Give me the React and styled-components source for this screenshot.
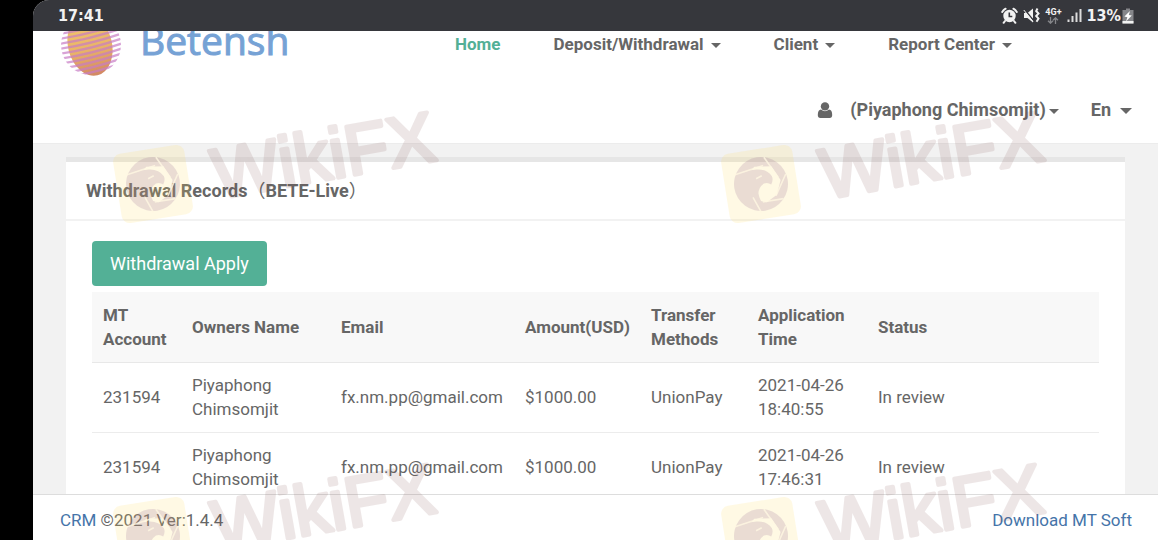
import React from 'react';
import styled, { createGlobalStyle } from 'styled-components';

const columns = [
  { title: 'MT Account', width: 89 },
  { title: 'Owners Name', width: 149 },
  { title: 'Email', width: 184 },
  { title: 'Amount(USD)', width: 126 },
  { title: 'Transfer Methods', width: 107 },
  { title: 'Application Time', width: 120 },
  { title: 'Status' },
];

const records = [
  ['231594', 'Piyaphong Chimsomjit', 'fx.nm.pp@gmail.com', '$1000.00', 'UnionPay', '2021-04-26 18:40:55', 'In review'],
  ['231594', 'Piyaphong Chimsomjit', 'fx.nm.pp@gmail.com', '$1000.00', 'UnionPay', '2021-04-26 17:46:31', 'In review'],
];

function App() {
  return (
    <Screen>
      <GlobalStyle />
      <Page>
        <StatusBar />
        <Header>
          <TopRow>
            <Brand href="#">
              <Globe />
              <BrandName>Betensh</BrandName>
            </Brand>
            <Nav>
              <NavLink href="#">Home</NavLink>
              <MenuButton>Deposit/Withdrawal <Caret /></MenuButton>
              <MenuButton>Client <Caret /></MenuButton>
              <MenuButton>Report Center <Caret /></MenuButton>
            </Nav>
          </TopRow>
          <UserRow>
            <UserButton>
              <UserIcon />
              <span>(Piyaphong Chimsomjit)</span>
              <TightCaret />
            </UserButton>
            <UserButton>En <WideCaret /></UserButton>
          </UserRow>
        </Header>
        <Main>
          <Card>
            <CardTitle>
              Withdrawal Records<Paren>（</Paren>BETE-Live<Paren>）</Paren>
            </CardTitle>
            <CardBody>
              <ApplyButton>Withdrawal Apply</ApplyButton>
              <Table>
                <colgroup>
                  {columns.map((c) => <col key={c.title} width={c.width} />)}
                </colgroup>
                <thead>
                  <tr>
                    {columns.map((c) => <Th key={c.title} scope="col">{c.title}</Th>)}
                  </tr>
                </thead>
                <tbody>
                  {records.map((row, i) => (
                    <tr key={i}>
                      {row.map((cell, j) => <Td key={j}>{cell}</Td>)}
                    </tr>
                  ))}
                </tbody>
              </Table>
            </CardBody>
          </Card>
        </Main>
        <Footer>
          <span><FooterLink href="#">CRM</FooterLink> ©2021 Ver:1.4.4</span>
          <FooterLink href="#">Download MT Soft</FooterLink>
        </Footer>
      </Page>
      <Watermarks aria-hidden="true">
        <Watermark />
        <Watermark />
        <Watermark />
        <Watermark />
      </Watermarks>
    </Screen>
  );
}

export default App;

function StatusBar() {
  return (
    <Bar>
      <span>17:41</span>
      <BarIcons>
        <svg width="17" height="17" viewBox="0 0 17 17">
          <circle cx="8.5" cy="9" r="6.2" fill="#f2f2f2" />
          <path d="M1.2 5 A11 11 0 0 1 4.6 1.7 M12.4 1.7 A11 11 0 0 1 15.8 5 M4 14 L2.6 15.8 M13 14 L14.4 15.8" stroke="#f2f2f2" strokeWidth="2" fill="none" strokeLinecap="round" />
          <path d="M8.3 5.5 V9.5 H11.3" stroke="#36373c" strokeWidth="1.6" fill="none" />
        </svg>
        <svg width="17" height="17" viewBox="0 0 17 17">
          <path d="M1 6 H4.5 L10 1.5 V15.5 L4.5 11 H1 Z" fill="#f2f2f2" />
          <path d="M1.5 2.5 L11 14" stroke="#36373c" strokeWidth="1.4" />
          <path d="M0.8 3 L10 14.6" stroke="#f2f2f2" strokeWidth="1" />
          <path d="M14.5 1.5 L13.2 4 L15.5 6.5 L13.2 9 L15.5 11.5 L13.5 14.8" stroke="#f2f2f2" strokeWidth="2" fill="none" />
        </svg>
        <Network>
          4G+
          <svg width="12" height="7" viewBox="0 0 12 7">
            <path d="M3.5 0 V6 M1 3.8 L3.5 6.2 L6 3.8 M8.5 7 V1 M6 3.2 L8.5 0.8 L11 3.2" stroke="#85868a" strokeWidth="1.3" fill="none" />
          </svg>
        </Network>
        <svg width="15" height="15" viewBox="0 0 15 15">
          <path d="M0.5 11.5 H2.5 V14 H0.5 Z M4.5 8 H6.5 V14 H4.5 Z M8.5 4.5 H10.5 V14 H8.5 Z M12.5 1 H14.5 V14 H12.5 Z" fill="#dcdcdc" />
        </svg>
        <Battery>
          13%
          <svg width="12" height="16" viewBox="0 0 12 16">
            <path d="M4 0.5 H8 V2 H11.5 V15.5 H0.5 V2 H4 Z" fill="#85868a" />
            <path d="M0.5 13 H11.5 V15.5 H0.5 Z" fill="#f2f2f2" />
            <path d="M8 3 L2.4 8.6 L5.4 9.2 L4 13.4 L9.8 7.6 L6.8 7 Z" fill="#fff" />
          </svg>
        </Battery>
      </BarIcons>
    </Bar>
  );
}

function Globe() {
  const lines = Array.from({ length: 15 }, (_, i) => -34 + i * 5);
  return (
    <svg width="62" height="62" viewBox="-31 -31 62 62">
      <defs>
        <clipPath id="globe"><circle r="30" /></clipPath>
        <linearGradient id="core" x1="0" y1="0" x2="0" y2="1">
          <stop offset="0" stopColor="#f2c96c" />
          <stop offset="0.55" stopColor="#e9b468" />
          <stop offset="1" stopColor="#d28862" />
        </linearGradient>
      </defs>
      <ellipse cx="-1" cy="0" rx="22" ry="31" fill="url(#core)" transform="rotate(-14)" />
      <g clipPath="url(#globe)">
        {lines.map((y) => (
          <path key={y} d={`M-32 ${y + 8} Q0 ${y + 3} 32 ${y - 8}`} stroke="#c77cc4" strokeOpacity="0.7" strokeWidth="2.3" fill="none" />
        ))}
      </g>
    </svg>
  );
}

function UserIcon() {
  return (
    <svg width="16" height="16" viewBox="0 0 16 16" fill="#666">
      <circle cx="8" cy="4.4" r="4.2" />
      <path d="M4 7.6 Q8 11 12 7.6 Q15.2 8 15.2 13 Q15.2 16 12.6 16 H3.4 Q0.8 16 0.8 13 Q0.8 8 4 7.6 Z" />
    </svg>
  );
}

function Watermark() {
  return (
    <svg width="350" height="140" viewBox="0 0 350 140">
      <g transform="translate(41 79) rotate(-9)">
        <rect x="-36" y="-35" width="72" height="70" rx="8" fill="#ffda60" opacity="0.17" />
        <g opacity="0.18">
          <path fillRule="evenodd" fill="#8f5f8c" d="M0 -27 A27 27 0 1 1 0 27 A27 27 0 1 1 0 -27 Z M-4 -18 L13 -16 L20 -1 L14 13 L3 19 L-15 12 L-19 -4 Z" />
          <path fill="#8f5f8c" d="M-23 -6 Q-14 -17 -2 -15 Q8 -14 12 -6 Q13 -2 10 2 Q7 -1 3 0 Q-3 3 -4 9 Q-4 17 2 25 Q-14 25 -20 15 Q-25 5 -23 -6 Z" />
        </g>
        <path d="M-25 -13 L5 -18 M7 -26 L18 -4 M26 -6 L13 14 M20 18 L-1 18 M-4 28 L-10 12 M2 -8 L-4 -6" stroke="#fff8e2" strokeWidth="1.6" strokeOpacity="0.8" fill="none" />
      </g>
      <g transform="translate(105 94) rotate(-10)" opacity="0.13">
        <MarkText x="0" y="0">WikiFX</MarkText>
      </g>
    </svg>
  );
}

const GlobalStyle = createGlobalStyle`
  * {
    box-sizing: border-box;
  }

  body {
    margin: 0;
    background-color: black;
    color: #666;
    font-family: Roboto, 'Noto Sans CJK SC', sans-serif;
    font-size: 17px;
    line-height: 24px;
  }

  svg {
    display: block;
    flex: none;
  }

  a {
    text-decoration: none;
  }

  button {
    border: 0;
    padding: 0;
    background: none;
    color: inherit;
    font: inherit;
    cursor: pointer;
  }
`;

const Screen = styled.div`
  position: relative;
  height: 100vh;
  padding-left: 33px;
  overflow: hidden;
`;

const Page = styled.div`
  height: 100%;
  display: flex;
  flex-direction: column;
  border-top-left-radius: 16px;
  overflow: hidden;
  background-color: #f2f2f2;
`;

const Bar = styled.div`
  flex: none;
  height: 31px;
  padding: 0 24px 0 25px;
  display: flex;
  align-items: center;
  justify-content: space-between;
  background-color: #36373c;
  color: #f2f2f2;
  font-family: 'DejaVu Sans Condensed', 'DejaVu Sans', sans-serif;
  font-size: 16px;
  font-weight: bold;
`;

const BarIcons = styled.div`
  display: flex;
  align-items: center;
  gap: 5px;
`;

const Network = styled.div`
  display: flex;
  flex-direction: column;
  align-items: center;
  font-family: Roboto, sans-serif;
  font-size: 9px;
  line-height: 9px;
`;

const Battery = styled.div`
  display: flex;
  align-items: center;
  gap: 1px;
`;

const Header = styled.header`
  flex: none;
  height: 113px;
  overflow: hidden;
  border-bottom: 1px solid #ececec;
  background-color: white;
  font-weight: bold;
`;

const TopRow = styled.div`
  height: 66px;
  margin-top: -20px;
  padding: 0 146px 0 27px;
  display: flex;
  align-items: flex-end;
  justify-content: space-between;
`;

const Brand = styled.a`
  display: flex;
  align-items: center;
  gap: 18px;
`;

const BrandName = styled.span`
  padding-bottom: 10px;
  color: #76a2d5;
  -webkit-text-stroke: 1px #76a2d5;
  font-family: 'Open Sans', 'Noto Sans', sans-serif;
  font-size: 39px;
  font-weight: normal;
  line-height: 54px;
`;

const Nav = styled.nav`
  padding-bottom: 21px;
  display: flex;
  gap: 53px;
`;

const NavLink = styled.a`
  color: #53b096;
`;

const MenuButton = styled.button`
  display: flex;
  align-items: center;
  gap: 7px;
`;

const Caret = styled.span`
  margin-top: 2px;
  border: 5px solid transparent;
  border-top-color: #666;
  border-bottom: 0;
`;

const TightCaret = styled(Caret)`
  margin-left: -6px;
`;

const WideCaret = styled(Caret)`
  border-width: 6px 6px 0;
`;

const UserRow = styled.div`
  padding: 21px 26px 0 0;
  display: flex;
  justify-content: flex-end;
  gap: 32px;
  font-size: 18px;
`;

const UserButton = styled(MenuButton)`
  gap: 9px;

  svg {
    margin-right: 8px;
  }
`;

const Main = styled.main`
  flex: 1;
  min-height: 0;
  overflow: hidden;
  padding: 13px 33px 0;
`;

const Card = styled.section`
  border-top: 5px solid #e6e6e6;
  background-color: white;
`;

const CardTitle = styled.h1`
  margin: 0;
  padding: 17px 20px 16px;
  border-bottom: 2px solid #f2f2f2;
  font-size: 18px;
  font-weight: bold;
  line-height: 24px;
`;

const Paren = styled.span`
  font-weight: normal;
`;

const CardBody = styled.div`
  padding: 20px 26px;
`;

const ApplyButton = styled.button`
  height: 45px;
  margin-bottom: 6px;
  padding: 0 18px;
  display: block;
  border-radius: 4px;
  background-color: #53b096;
  color: white;
  font-size: 18px;
`;

const Table = styled.table`
  width: 100%;
  table-layout: fixed;
  border-collapse: collapse;
  text-align: left;
`;

const Th = styled.th`
  height: 70px;
  padding: 10px 11px;
  border-bottom: 1px solid #e8e8e8;
  background-color: #f8f8f8;
`;

const Td = styled.td`
  height: 70px;
  padding: 10px 11px;
  border-bottom: 1px solid #ececec;
`;

const Footer = styled.footer`
  flex: none;
  height: 46px;
  padding: 4px 26px 0 27px;
  display: flex;
  align-items: center;
  justify-content: space-between;
  border-top: 1px solid #ddd;
  background-color: white;
`;

const FooterLink = styled.a`
  color: #4574a9;
`;

const Watermarks = styled.div`
  position: absolute;
  inset: 0;
  padding: 105px 0 0 112px;
  display: grid;
  grid-template-columns: 608px 608px;
  grid-auto-rows: 352px;
  pointer-events: none;
`;

const MarkText = styled.text`
  fill: #7e4848;
  stroke: #7e4848;
  stroke-width: 4px;
  stroke-linejoin: round;
  font-family: 'Liberation Sans', sans-serif;
  font-size: 71px;
`;
